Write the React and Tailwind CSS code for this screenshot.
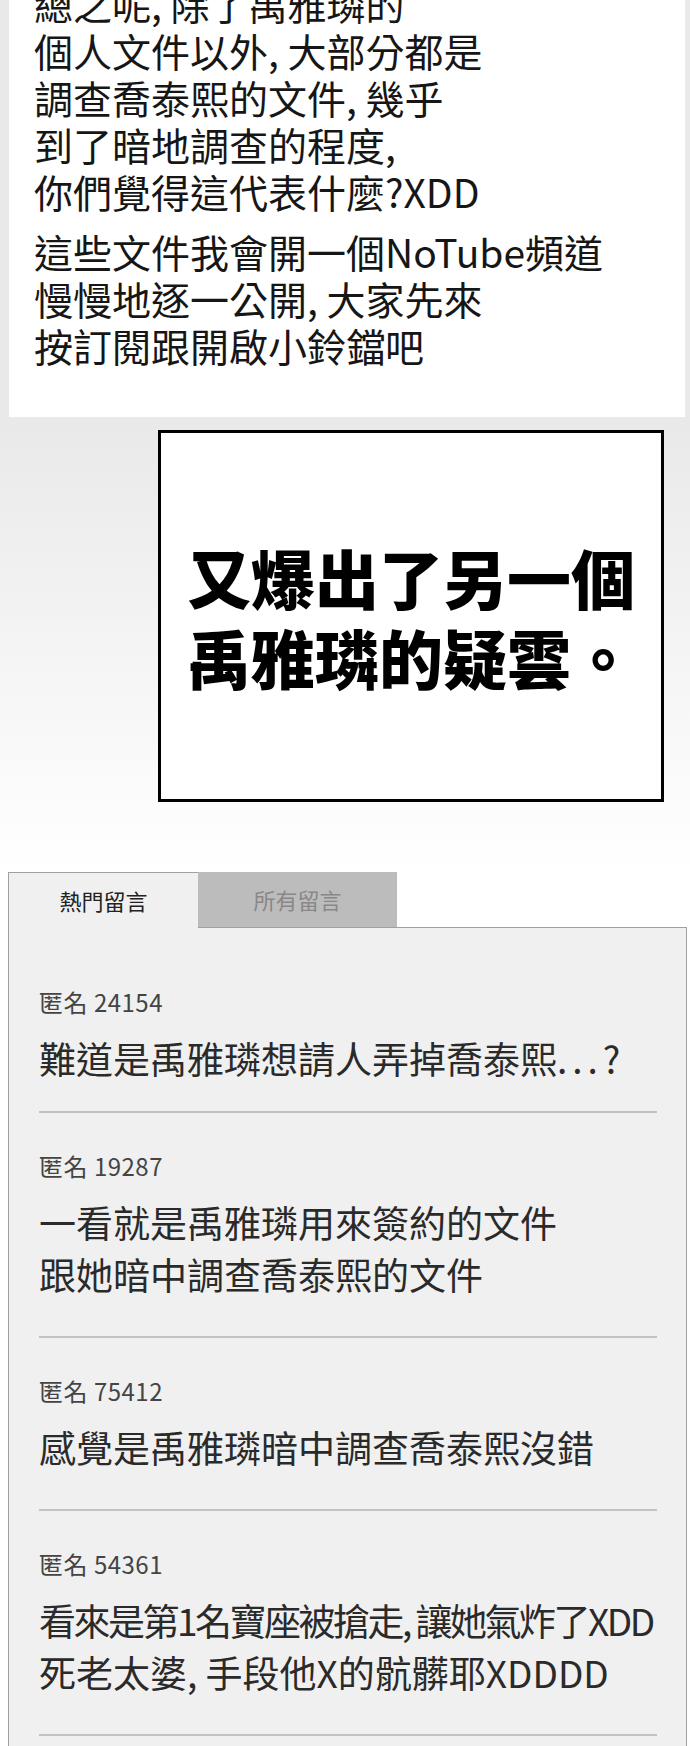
import React from "react";

const FONT = { fontFamily: '"Noto Sans CJK TC", "Noto Sans", sans-serif' };

const comments = [
  {
    id: "24154",
    lines: [
      <>
        難道是禹雅璘想請人弄掉喬泰熙<span className="tracking-[5px]">...</span>?
      </>,
    ],
    top: "pt-[59px]",
    bottom: "mt-[27px]",
  },
  { id: "19287", lines: ["一看就是禹雅璘用來簽約的文件", "跟她暗中調查喬泰熙的文件"], top: "pt-[38px]", bottom: "mt-[36px]" },
  { id: "75412", lines: ["感覺是禹雅璘暗中調查喬泰熙沒錯"], top: "pt-[38px]", bottom: "mt-[36px]" },
  {
    id: "54361",
    lines: ["看來是第1名寶座被搶走, 讓她氣炸了XDD", "死老太婆, 手段他X的骯髒耶XDDDD"],
    top: "pt-[38px]",
    bottom: "mt-[36px]",
  },
];

function Comment({ id, lines, top, bottom }) {
  return (
    <div className="flex flex-col">
      <div className={`${top} text-[24px] leading-[30px] tracking-[0.5px] text-[#444] whitespace-nowrap`}>
        匿名 {id}
      </div>
      <div className="mt-[15px] text-[37px] leading-[52px] text-[#2a2a2a] whitespace-nowrap">
        {lines.map((l, i) => (
          <div key={i} className={typeof l === "string" && l.length > 20 ? "tracking-[-2.5px]" : ""}>
            {l}
          </div>
        ))}
      </div>
      <div className={`${bottom} h-[2px] bg-[#c2c2c2]`} />
    </div>
  );
}

export default function App() {
  return (
    <div className="w-[690px] min-h-[1746px] bg-white overflow-hidden" style={FONT}>
      {/* story text panel */}
      <div className="bg-[#e9e9e9] pl-[9px] pr-[5px]">
        <div className="h-[417px] bg-white overflow-hidden pl-[25px]">
          <div className="-mt-[20px] text-[39px] leading-[47px] text-[#161616] whitespace-nowrap">
            <p>總之呢, 除了禹雅璘的</p>
            <p>個人文件以外, 大部分都是</p>
            <p>調查喬泰熙的文件, 幾乎</p>
            <p>到了暗地調查的程度,</p>
            <p>你們覺得這代表什麼?XDD</p>
            <div className="mt-[13px]">
              <p>這些文件我會開一個NoTube頻道</p>
              <p>慢慢地逐一公開, 大家先來</p>
              <p>按訂閱跟開啟小鈴鐺吧</p>
            </div>
          </div>
        </div>
      </div>

      {/* caption box */}
      <div className="bg-gradient-to-b from-[#e9e9e9] to-white pt-[13px] pb-[70px] pl-[158px]">
        <div className="w-[506px] h-[372px] border-[3px] border-black bg-white flex items-center justify-center">
          <p className="text-[64px] leading-[80px] font-black text-black text-center whitespace-nowrap">
            又爆出了另一個
            <br />
            禹雅璘的疑雲。
          </p>
        </div>
      </div>

      {/* comments */}
      <div className="pl-[8px] w-[687px]">
        <div className="flex h-[56px]">
          <div className="w-[190px] bg-[#f0f0f0] border-t border-l border-[#a0a0a0] flex items-center justify-center text-[22px] text-[#222]">
            熱門留言
          </div>
          <div className="w-[199px] bg-[#bcbcbc] border-b border-[#a0a0a0] flex items-center justify-center text-[22px] text-[#888]">
            所有留言
          </div>
          <div className="flex-1 border-b border-[#a0a0a0]" />
        </div>
        <div className="bg-[#f0f0f0] border-l border-r border-[#a0a0a0] pl-[30px] pr-[29px] min-h-[830px]">
          {comments.map((c) => (
            <Comment key={c.id} {...c} />
          ))}
        </div>
      </div>
    </div>
  );
}
